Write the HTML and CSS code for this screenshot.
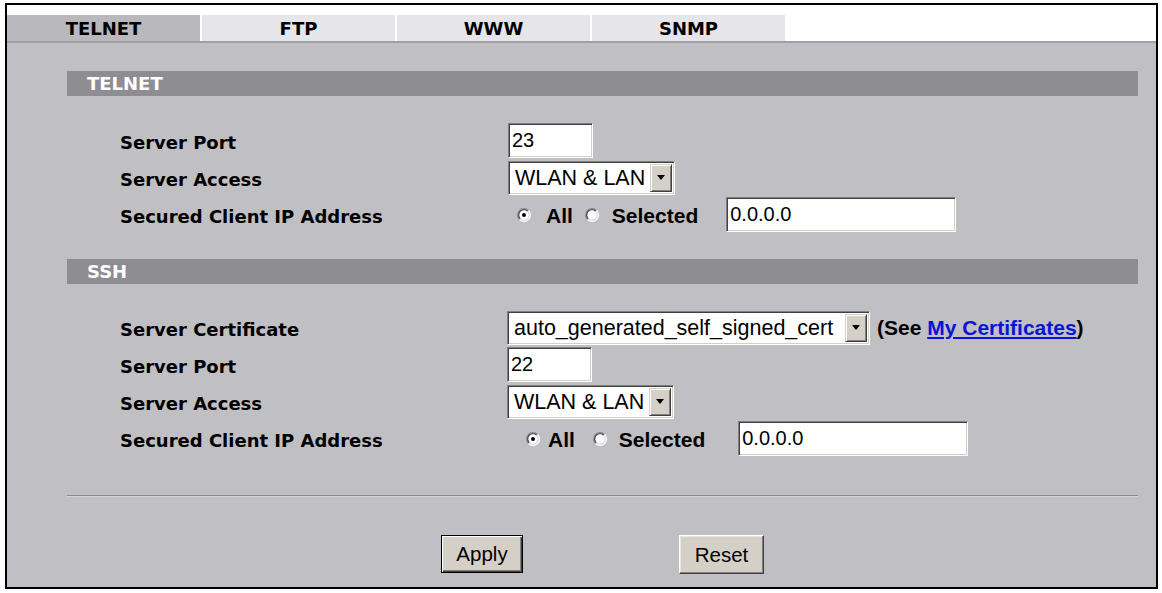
FILE: index.html
```html
<!DOCTYPE html>
<html lang="en">
<head>
<meta charset="utf-8">
<title>Remote Management - TELNET</title>
<link rel="stylesheet" href="styles.css">
</head>
<body>
<div class="frame">
  <div class="tabs">
    <div class="tab active">TELNET</div>
    <div class="tab">FTP</div>
    <div class="tab">WWW</div>
    <div class="tab">SNMP</div>
  </div>
  <div class="content">
    <div class="bar">TELNET</div>
    <div class="form form-telnet">
      <div class="label">Server Port</div>
      <div class="ctrl"><div class="field port">23</div></div>
      <div class="label">Server Access</div>
      <div class="ctrl">
        <div class="select access"><span class="select-text">WLAN &amp; LAN</span><span class="select-btn"><span class="tri"></span></span></div>
      </div>
      <div class="label">Secured Client IP Address</div>
      <div class="ctrl radios">
        <span class="radio"><svg width="14" height="14" viewBox="0 0 12 12"><path d="M1.757 10.243A6 6 0 0 1 10.243 1.757Z" fill="#8a898e"/><path d="M10.243 1.757A6 6 0 0 1 1.757 10.243Z" fill="#ffffff"/><path d="M2.464 9.536A5 5 0 0 1 9.536 2.464Z" fill="#4a4a4a"/><path d="M9.536 2.464A5 5 0 0 1 2.464 9.536Z" fill="#d8d7dc"/><circle cx="6" cy="6" r="4" fill="#ffffff"/><circle cx="6" cy="6" r="1.7" fill="#000"/></svg></span>
        <span class="opt opt-all">All</span>
        <span class="radio radio-sel"><svg width="14" height="14" viewBox="0 0 12 12"><path d="M1.757 10.243A6 6 0 0 1 10.243 1.757Z" fill="#8a898e"/><path d="M10.243 1.757A6 6 0 0 1 1.757 10.243Z" fill="#ffffff"/><path d="M2.464 9.536A5 5 0 0 1 9.536 2.464Z" fill="#4a4a4a"/><path d="M9.536 2.464A5 5 0 0 1 2.464 9.536Z" fill="#d8d7dc"/><circle cx="6" cy="6" r="4" fill="#ffffff"/></svg></span>
        <span class="opt opt-sel">Selected</span>
        <div class="field ip">0.0.0.0</div>
      </div>
    </div>

    <div class="bar">SSH</div>
    <div class="form form-ssh">
      <div class="label">Server Certificate</div>
      <div class="ctrl">
        <div class="select cert"><span class="select-text">auto_generated_self_signed_cert</span><span class="select-btn"><span class="tri"></span></span></div>
        <span class="see">(See <a href="#" class="link">My Certificates</a>)</span>
      </div>
      <div class="label">Server Port</div>
      <div class="ctrl"><div class="field port">22</div></div>
      <div class="label">Server Access</div>
      <div class="ctrl">
        <div class="select access"><span class="select-text">WLAN &amp; LAN</span><span class="select-btn"><span class="tri"></span></span></div>
      </div>
      <div class="label">Secured Client IP Address</div>
      <div class="ctrl radios">
        <span class="radio"><svg width="14" height="14" viewBox="0 0 12 12"><path d="M1.757 10.243A6 6 0 0 1 10.243 1.757Z" fill="#8a898e"/><path d="M10.243 1.757A6 6 0 0 1 1.757 10.243Z" fill="#ffffff"/><path d="M2.464 9.536A5 5 0 0 1 9.536 2.464Z" fill="#4a4a4a"/><path d="M9.536 2.464A5 5 0 0 1 2.464 9.536Z" fill="#d8d7dc"/><circle cx="6" cy="6" r="4" fill="#ffffff"/><circle cx="6" cy="6" r="1.7" fill="#000"/></svg></span>
        <span class="opt opt-all">All</span>
        <span class="radio radio-sel"><svg width="14" height="14" viewBox="0 0 12 12"><path d="M1.757 10.243A6 6 0 0 1 10.243 1.757Z" fill="#8a898e"/><path d="M10.243 1.757A6 6 0 0 1 1.757 10.243Z" fill="#ffffff"/><path d="M2.464 9.536A5 5 0 0 1 9.536 2.464Z" fill="#4a4a4a"/><path d="M9.536 2.464A5 5 0 0 1 2.464 9.536Z" fill="#d8d7dc"/><circle cx="6" cy="6" r="4" fill="#ffffff"/></svg></span>
        <span class="opt opt-sel">Selected</span>
        <div class="field ip">0.0.0.0</div>
      </div>
    </div>

    <div class="rule"></div>
    <div class="buttons">
      <button class="btn btn-default" type="button">Apply</button>
      <button class="btn" type="button">Reset</button>
    </div>
  </div>
</div>
</body>
</html>
```

FILE: styles.css
```css
html, body {
  margin: 0;
  padding: 0;
  background: #ffffff;
}

.frame {
  margin: 3px 0 0 5px;
  width: 1153px;
  height: 586px;
  box-sizing: border-box;
  border: 2px solid #000000;
  background: #c0bfc4;
  display: flex;
  flex-direction: column;
}

/* Tabs */
.tabs {
  display: flex;
  gap: 2px;
  padding-top: 10px;
  height: 26px;
  background: #ffffff;
  border-bottom: 2px solid #a09fa4;
}

.tab {
  width: 193px;
  height: 26px;
  background: #e6e5ea;
  color: #000000;
  font-family: "DejaVu Sans", Verdana, sans-serif;
  font-weight: bold;
  font-size: 18px;
  line-height: 27px;
  text-align: center;
}

.tab.active {
  background: #b9b8bd;
}

/* Content */
.content {
  padding: 28px 18px 0 60px;
}

.bar {
  height: 25px;
  background: #8e8d92;
  color: #ffffff;
  font-family: "DejaVu Sans", Verdana, sans-serif;
  font-weight: bold;
  font-size: 18px;
  line-height: 26px;
  padding-left: 20px;
}

.form {
  display: grid;
  grid-template-columns: 388px 1fr;
  grid-auto-rows: 37px;
  padding-left: 53px;
  margin-top: 27px;
  margin-bottom: 25px;
}

.form-ssh {
  grid-template-columns: 387px 1fr;
  margin-top: 26px;
  margin-bottom: 0;
}

.label {
  font-family: "DejaVu Sans", Verdana, sans-serif;
  font-weight: bold;
  font-size: 18px;
  line-height: 39px;
  color: #000000;
  white-space: nowrap;
}

.ctrl {
  display: flex;
  align-items: center;
  height: 35px;
}

/* Classic sunken text field */
.field {
  box-sizing: border-box;
  height: 35px;
  background: #ffffff;
  border: 1px solid;
  border-color: #808080 #ffffff #ffffff #808080;
  box-shadow: inset 1px 1px 0 #404040, inset -1px -1px 0 #d4d0c8;
  font-family: "Liberation Sans", Arial, sans-serif;
  font-size: 20px;
  line-height: 33px;
  padding-left: 3px;
  color: #000000;
  white-space: nowrap;
}

.port {
  width: 85px;
}

.ip {
  width: 230px;
}

/* Classic select */
.select {
  box-sizing: border-box;
  height: 34px;
  display: flex;
  align-items: stretch;
  background: #ffffff;
  border: 1px solid;
  border-color: #808080 #ffffff #ffffff #808080;
  box-shadow: inset 1px 1px 0 #404040, inset -1px -1px 0 #d4d0c8;
  padding: 2px;
}

.access {
  width: 167px;
}

.cert {
  width: 363px;
}

.select-text {
  flex: 1;
  font-family: "Liberation Sans", Arial, sans-serif;
  font-size: 21.5px;
  line-height: 29px;
  padding-left: 4px;
  color: #000000;
  white-space: nowrap;
  overflow: hidden;
}

.select-btn {
  box-sizing: border-box;
  width: 22px;
  background: #d4d0c8;
  border: 1px solid;
  border-color: #d4d0c8 #404040 #404040 #d4d0c8;
  box-shadow: inset 1px 1px 0 #ffffff, inset -1px -1px 0 #808080;
  display: flex;
  align-items: center;
  justify-content: center;
}

.tri {
  width: 0;
  height: 0;
  border-left: 4.5px solid transparent;
  border-right: 4.5px solid transparent;
  border-top: 5px solid #000000;
}

.see {
  margin-left: 7px;
  font-family: "Liberation Sans", Arial, sans-serif;
  font-weight: bold;
  font-size: 21px;
  color: #000000;
  white-space: nowrap;
}

.link {
  color: #0a14d8;
  text-decoration: underline;
}

/* Radios */
.radio {
  display: inline-flex;
  width: 14px;
  height: 14px;
}

.opt {
  font-family: "Liberation Sans", Arial, sans-serif;
  font-weight: bold;
  font-size: 21px;
  color: #000000;
  padding-top: 3px;
}

.form-telnet .radios {
  padding-left: 9px;
}
.form-telnet .opt-all {
  margin-left: 15px;
}
.form-telnet .radio-sel {
  margin-left: 12px;
}
.form-telnet .opt-sel {
  margin-left: 13px;
}
.form-telnet .ip {
  margin-left: 28px;
}

.form-ssh .radios {
  padding-left: 19px;
}
.form-ssh .opt-all {
  margin-left: 8px;
}
.form-ssh .radio-sel {
  margin-left: 18px;
}
.form-ssh .opt-sel {
  margin-left: 12px;
}
.form-ssh .ip {
  margin-left: 33px;
}

/* Rule and buttons */
.rule {
  margin-top: 37px;
  height: 1px;
  background: #8a898e;
  border-bottom: 1px solid #d6d5da;
}

.buttons {
  display: flex;
  justify-content: center;
  align-items: flex-start;
  gap: 156px;
  margin-top: 38px;
}

.btn {
  box-sizing: border-box;
  height: 39px;
  width: 85px;
  margin: 0;
  padding: 0;
  background: #d4d0c8;
  border: 1px solid;
  border-color: #ffffff #404040 #404040 #ffffff;
  box-shadow: inset -1px -1px 0 #808080, inset 1px 1px 0 #e8e6e0;
  font-family: "Liberation Sans", Arial, sans-serif;
  font-size: 20.5px;
  color: #000000;
  line-height: 36px;
}

.btn-default {
  width: 82px;
  height: 38px;
  border: 1px solid #000000;
  box-shadow: inset 1px 1px 0 #ffffff, inset -1px -1px 0 #404040, inset -2px -2px 0 #808080;
}
```
